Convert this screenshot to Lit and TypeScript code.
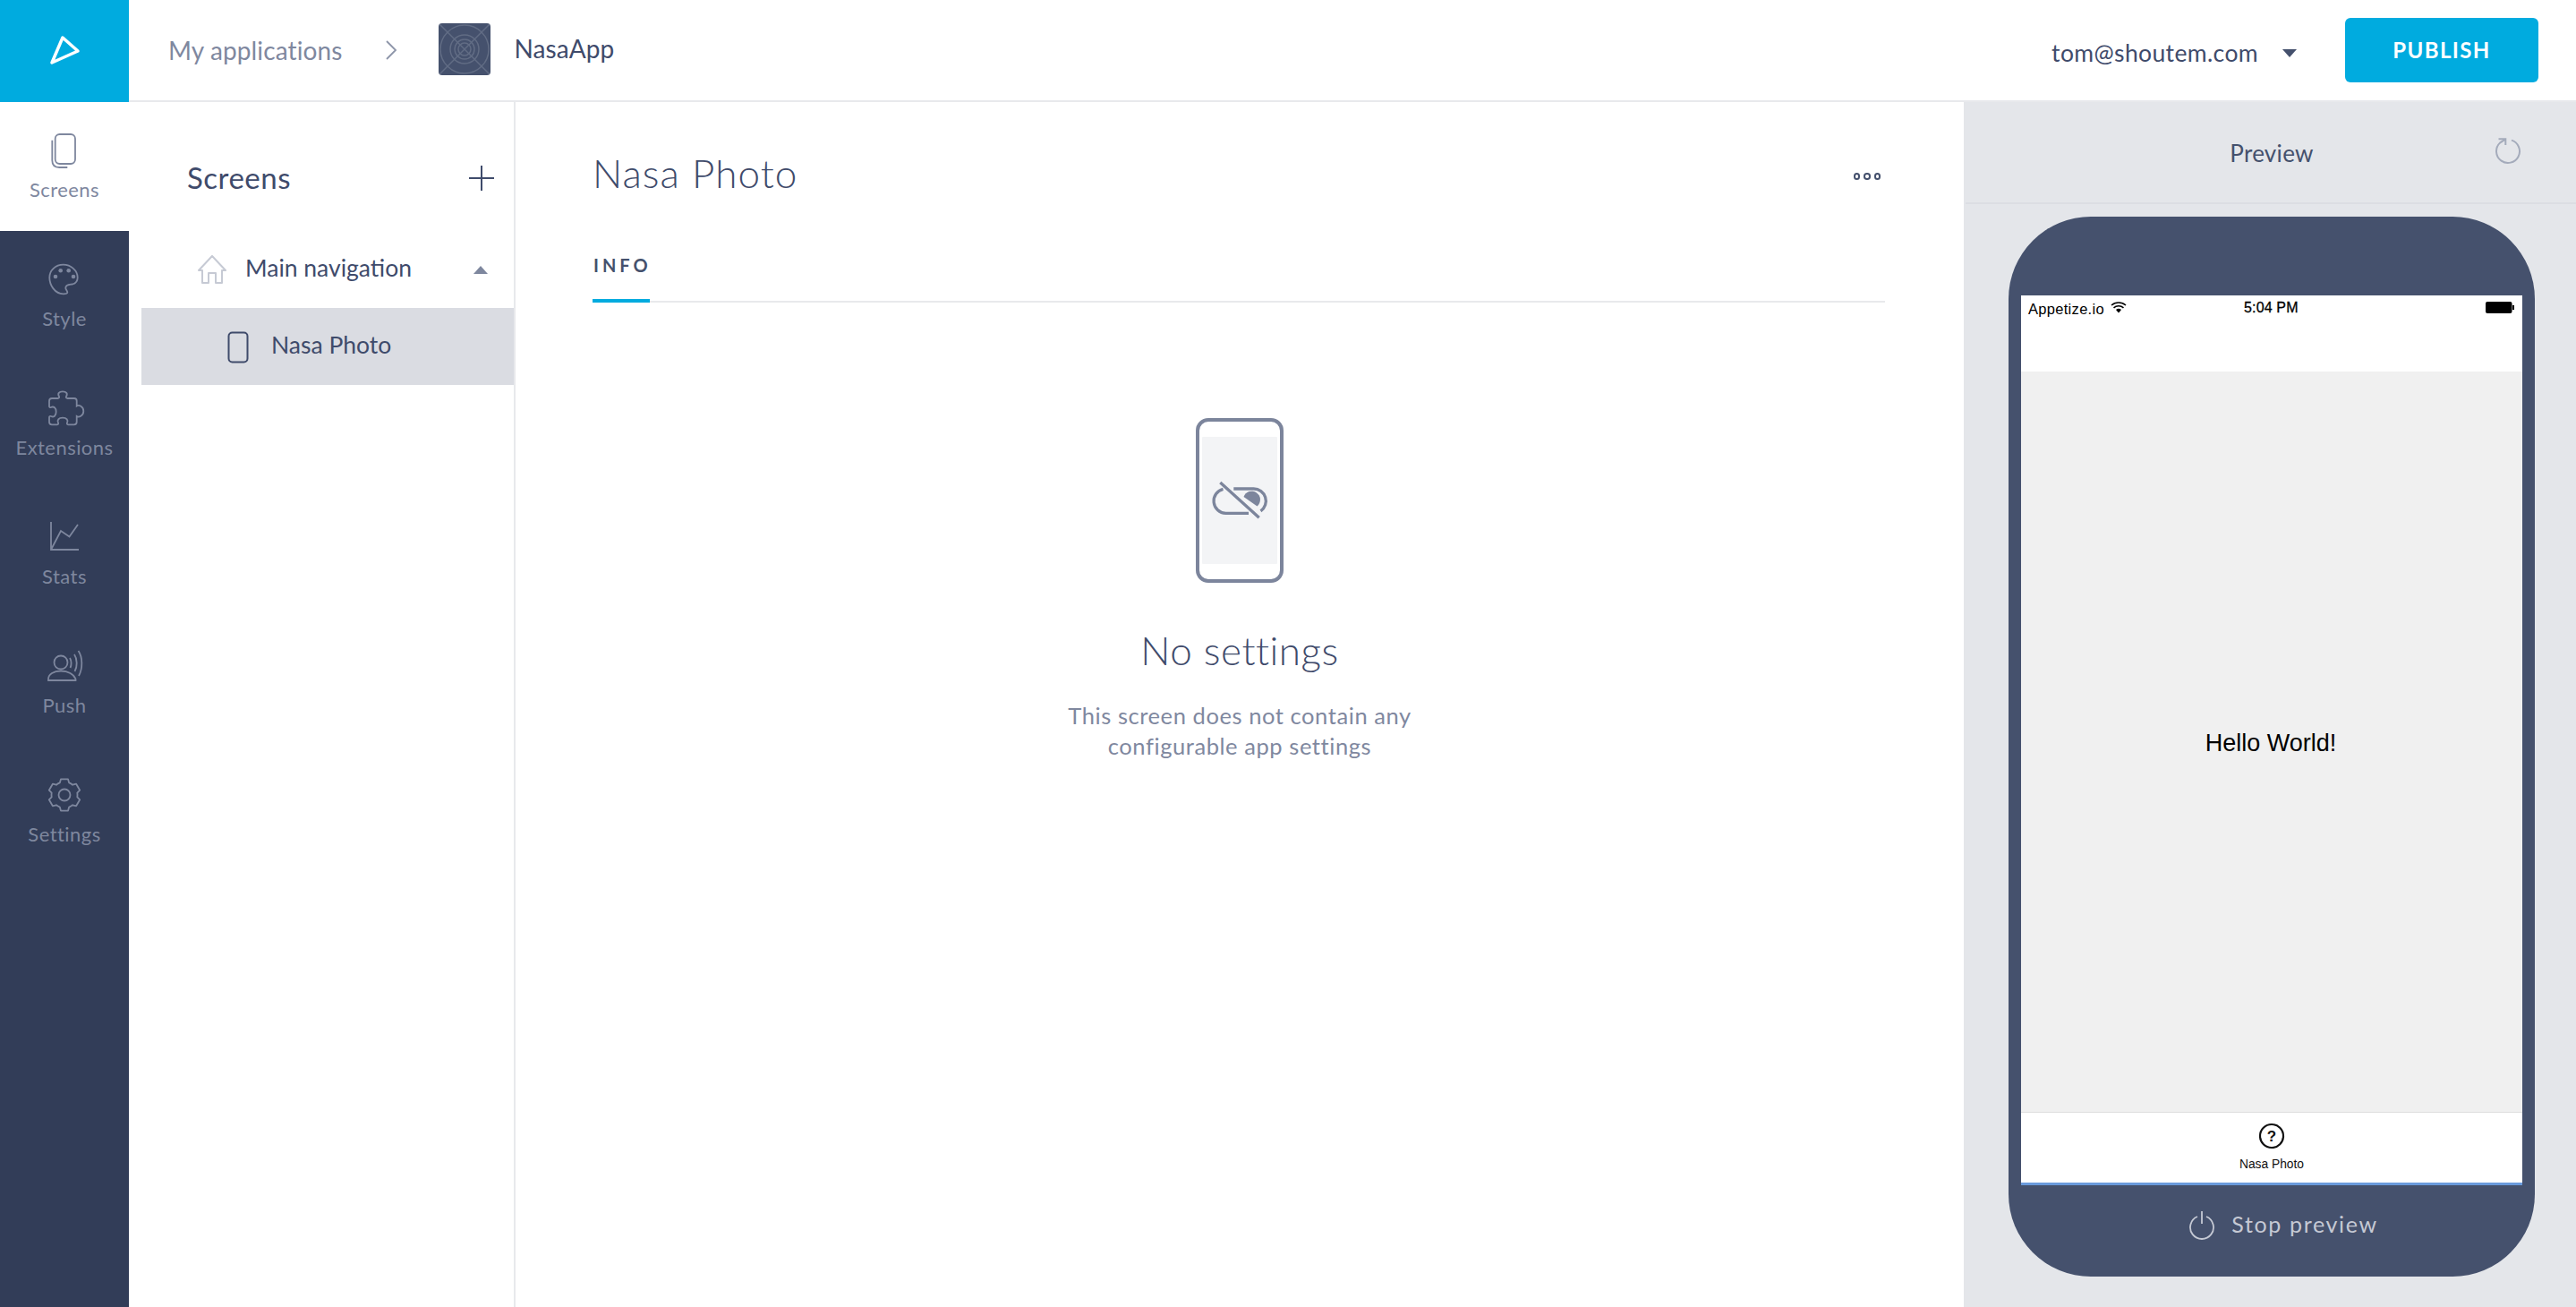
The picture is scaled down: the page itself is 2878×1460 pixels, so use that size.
import { LitElement, html, css, svg } from "lit";
import { customElement } from "lit/decorators.js";

function gearPath(cx: number, cy: number, ro: number, ri: number): string {
  const pt = (r: number, deg: number) => {
    const t = (deg * Math.PI) / 180;
    return `${(cx + r * Math.cos(t)).toFixed(2)} ${(cy - r * Math.sin(t)).toFixed(2)}`;
  };
  let d = "";
  for (let k = 0; k < 6; k++) {
    const a = 90 - 60 * k;
    d += `${k === 0 ? "M" : `A${ri} ${ri} 0 0 1 `}${pt(ri, a + 21)}L${pt(ro, a + 13)}L${pt(ro, a - 13)}L${pt(ri, a - 21)}`;
  }
  const first = pt(ri, 90 + 21);
  return `${d}A${ri} ${ri} 0 0 1 ${first}Z`;
}

const navIcons: Record<string, any> = {
  Screens: svg`<rect x="11.700" y="4" width="22.300" height="33" rx="5"/><path d="M8.300 10.700V33c0 5 3 8 8 8h9"/>`,
  Style: svg`<path d="M20.700 5.700C29 5.700 36.700 12 36.700 20C36.700 24 35 26.500 31 27.500C28.500 28 23.300 27.500 23.300 31.700C23.300 33.500 25.300 34.500 25.300 36.500C25.300 37.800 23 38.300 20.700 38.300C11 38.300 5.300 28 5.300 20C5.300 12 12 5.700 20.700 5.700Z"/><g class="fill"><circle cx="12" cy="19" r="2.300"/><circle cx="17.700" cy="12.300" r="2.300"/><circle cx="26.700" cy="12.300" r="2.300"/><circle cx="32" cy="19" r="2.300"/></g>`,
  Extensions: svg`<path d="M8 11H14.500c1.500 0 2-1 1.500-2c-2-3.500 0-5.700 4-5.700s6 2.200 4 5.700c-.5 1 0 2 1.500 2H33c1.700 0 2.700 1 2.700 2.700V19.500C38 18 43.300 20 43.300 25.300C43.300 30.600 38 32.600 35.700 31V37.300c0 2-1 3-3 3H26c-1 0-1.500-1-1-2c1.500-3-.5-5.600-5-5.600s-6.500 2.600-5 5.600c.5 1 0 2-1 2H8c-2 0-3-1-3-3V32c0-1 1-1.500 2-1c3 1.500 5.700-.5 5.700-5s-2.700-6.500-5.700-5c-1 .5-2 0-2-1V14c0-2 1-3 3-3z"/>`,
  Stats: svg`<path d="M7 5v31h31M7 36l11-21 9.500 6.500L37 8"/>`,
  Push: svg`<circle cx="18" cy="18" r="7.500"/><path d="M4 38v-1.500C4 31 10 27.500 18 27.500S32.500 31 34.500 36.500V38z"/><path d="M28 13c2 3 2 8 .5 11M33 9c3.500 5 3.500 14 .5 19M37.500 5c5 7 5 20 .5 28"/>`,
  Settings: svg`<circle cx="22" cy="22" r="6.500"/><path d="${gearPath(22, 22, 18, 14.5)}" stroke-linejoin="round"/>`,
};

const NAV = ["Screens", "Style", "Extensions", "Stats", "Push", "Settings"];

@customElement("app-root")
export class AppRoot extends LitElement {
  static styles = css`
    :host { display: block; height: 1460px; font-family: "Lato", "Noto Sans", sans-serif; color: #3f4b6b; background: #fff; overflow: hidden; }
    * { box-sizing: border-box; }
    .header { display: flex; align-items: center; height: 114px; background: #fff; border-bottom: 2px solid #e8e9ec; }
    .logo { width: 144px; height: 114px; margin-bottom: -2px; background: #00abdf; display: flex; align-items: center; justify-content: center; flex: none; }
    .crumb { margin-left: 44px; font-size: 28px; color: #7f889f; letter-spacing: 0.12px; }
    .chev { margin-left: 46px; width: 16px; height: 24px; }
    .app-ic { margin-left: 45px; width: 58px; height: 58px; border-radius: 4px; background: #45516d; margin-bottom: 2px; display: block; }
    .app-name { margin-left: 27px; font-size: 28px; color: #3f4b6b; margin-bottom: 4px; letter-spacing: 0.1px; }
    .spacer { flex: 1; }
    .email { font-size: 26.500px; color: #3f4b6b; letter-spacing: 0.38px; margin-top: 6px; }
    .tri-down { margin-left: 27px; margin-top: 6px; width: 0; height: 0; border-left: 8px solid transparent; border-right: 8px solid transparent; border-top: 9px solid #45516d; }
    .publish { margin-left: 54px; margin-right: 42px; width: 216px; height: 72px; padding-bottom: 2px; border-radius: 6px; background: #00abdf; color: #fff; font: 700 24px "Lato", sans-serif; letter-spacing: 1.4px; display: flex; align-items: center; justify-content: center; }

    .body { display: flex; height: 1346px; }
    .sidebar { width: 144px; flex: none; background: #323d58; display: flex; flex-direction: column; }
    .nav { height: 144px; display: flex; flex-direction: column; align-items: center; padding-top: 32px; color: #7e879e; font-size: 22px; letter-spacing: 0.45px; }
    .nav.active { background: #fff; color: #7f889f; }
    .nav svg { width: 44px; height: 44px; display: block; fill: none; stroke: #7e879e; stroke-width: 1.800; margin-bottom: 8px; overflow: visible; }
    .nav .fill { fill: #7e879e; stroke: none; }
    .nav span { line-height: 28px; }

    .panel { width: 432px; flex: none; border-right: 2px solid #e8e9ec; padding-left: 14px; }
    .panel-head { display: flex; align-items: center; justify-content: space-between; height: 170px; padding: 0 22px 0 51px; }
    .panel-head h2 { margin: 0 0 3px; font-size: 33px; font-weight: 400; color: #3f4b6b; letter-spacing: 0.5px; }
    .plus { width: 28px; height: 28px; stroke: #3f4b6b; stroke-width: 2; display: block; }
    .tree-main { display: flex; align-items: center; height: 34px; margin-bottom: 26px; padding: 0 28px 0 63px; }
    .home { width: 32px; height: 32px; fill: none; stroke: #c6cad4; stroke-width: 2; flex: none; }
    .tree-main span { margin-left: 21px; font-size: 26.500px; letter-spacing: 0; color: #3f4b6b; flex: 1; margin-bottom: 4px; }
    .tri-up { width: 0; height: 0; border-left: 8.500px solid transparent; border-right: 8.500px solid transparent; border-bottom: 9px solid #7e879e; margin-right: 1px; }
    .tree-item { display: flex; align-items: center; height: 86px; background: #dadce2; padding-left: 96px; }
    .tree-item svg { width: 24px; height: 36px; fill: none; stroke: #3f4b6b; stroke-width: 2; flex: none; margin-top: 2px; }
    .tree-item span { margin-left: 25px; font-size: 26.500px; letter-spacing: 0; color: #3f4b6b; margin-bottom: 4px; }

    .main { flex: 1; min-width: 0; padding: 0 88px 0 86px; display: flex; flex-direction: column; }
    .title-row { display: flex; justify-content: space-between; align-items: center; height: 96px; margin-top: 32px; }
    .title-row h1 { margin: 0 0 2px; font-size: 44px; font-weight: 300; color: #3f4b6b; letter-spacing: 1.05px; }
    .dots { display: flex; gap: 4px; margin-right: 5px; margin-top: 6px; }
    .dots i { width: 7.500px; height: 7.500px; border: 2px solid #45516d; border-radius: 50%; display: block; }
    .tabs { border-bottom: 2px solid #e8e9ec; height: 96px; display: flex; align-items: flex-end; }
    .tab { width: 64px; height: 54px; border-bottom: 4px solid #00abdf; margin-bottom: -2px; font-size: 20px; font-weight: 700; letter-spacing: 4px; color: #45516d; padding-left: 1px; white-space: nowrap; line-height: 24px; }
    .empty { display: flex; flex-direction: column; align-items: center; margin-top: 129px; padding-left: 2px; }
    .illus { width: 98px; height: 184px; display: block; }
    .empty h3 { margin: 47px 0 0; font-size: 44px; font-weight: 300; letter-spacing: 0.5px; color: #3f4b6b; line-height: 56px; }
    .empty p { margin: 29px 0 0; font-size: 25.500px; line-height: 33.500px; color: #7f889f; text-align: center; letter-spacing: 0.57px; }

    .preview { width: 684px; flex: none; background: #e4e6ea; display: flex; flex-direction: column; align-items: stretch; }
    .preview-head { height: 114px; margin-left: 2px; border-bottom: 2px solid #dcdee3; display: flex; align-items: center; justify-content: center; position: relative; font-size: 26px; color: #45516d; letter-spacing: 0.3px; padding-left: 2px; }
    .preview-head span { margin-top: 2px; }
    .refresh { position: absolute; left: 592px; top: 40px; width: 30px; height: 30px; fill: none; stroke: #a4abbb; stroke-width: 2; overflow: visible; }
    .phone { margin: 14px 46px 0 50px; height: 1184px; background: #45516d; border-radius: 92px; padding: 88px 14px 0; display: flex; flex-direction: column; }
    .screen { height: 994px; background: #fff; display: flex; flex-direction: column; font-family: "Liberation Sans", Arial, sans-serif; color: #000; }
    .status { height: 85px; display: flex; align-items: flex-start; padding: 6px 9px 0 8px; position: relative; font-size: 16.500px; line-height: 18px; letter-spacing: 0.3px; }
    .wifi { width: 18px; height: 14px; margin-left: 7px; }
    .time { position: absolute; left: 249px; top: 5px; font-size: 16px; letter-spacing: 0.15px; -webkit-text-stroke: 0.3px #000; }
    .batt { margin-left: auto; margin-top: 1px; width: 32px; height: 13px; display: block; }
    .content { flex: 1; background: #f0f0f0; border-bottom: 1px solid #dedede; display: flex; align-items: center; justify-content: center; font-size: 27px; padding: 3px 2px 0 0; }
    .tabbar { height: 81px; background: #fff; border-bottom: 3px solid #6a9bdc; display: flex; flex-direction: column; align-items: center; padding-top: 11px; }
    .tabbar svg { width: 30px; height: 30px; display: block; }
    .tabbar span { font-size: 13.800px; margin-top: 9px; line-height: 16px; color: #111; }
    .stop { flex: 1; display: flex; align-items: center; justify-content: center; color: #c5c9d4; font-size: 25px; letter-spacing: 1.65px; padding-left: 26px; margin-top: -16px; }
    .stop svg { width: 30px; height: 34px; fill: none; stroke: #c5c9d4; stroke-width: 1.800; margin-right: 18px; margin-top: 4px; }
  `;

  render() {
    return html`
      <div class="header">
        <div class="logo">
          <svg width="36" height="36" viewBox="0 0 36 36" fill="none" stroke="#fff" stroke-width="3.500" stroke-linejoin="round"><path d="M16 3 L33 18 L4 31 Z"/></svg>
        </div>
        <span class="crumb">My applications</span>
        <svg class="chev" viewBox="0 0 16 24" fill="none" stroke="#8d95a9" stroke-width="1.800"><path d="M3 2l10 10L3 22"/></svg>
        <svg class="app-ic" viewBox="0 0 58 58" fill="none" stroke="#616c84" stroke-width="1.500">
          <circle cx="29" cy="29" r="27"/><circle cx="29" cy="29" r="16"/><circle cx="29" cy="29" r="11"/><circle cx="29" cy="29" r="7"/><path d="M0 0l58 58M58 0L0 58"/>
        </svg>
        <span class="app-name">NasaApp</span>
        <span class="spacer"></span>
        <span class="email">tom@shoutem.com</span>
        <span class="tri-down"></span>
        <div class="publish">PUBLISH</div>
      </div>
      <div class="body">
        <div class="sidebar">
          ${NAV.map((n, i) => html`<div class="nav ${i === 0 ? "active" : ""}"><svg viewBox="0 0 44 44">${navIcons[n]}</svg><span>${n}</span></div>`)}
        </div>
        <div class="panel">
          <div class="panel-head">
            <h2>Screens</h2>
            <svg class="plus" viewBox="0 0 28 28"><path d="M14 0v28M0 14h28"/></svg>
          </div>
          <div class="tree-main">
            <svg class="home" viewBox="0 0 32 32"><path d="M1 17L16 1l15 16h-4v14H20V20h-8v11H5V17z" stroke-linejoin="round"/></svg>
            <span>Main navigation</span>
            <i class="tri-up"></i>
          </div>
          <div class="tree-item">
            <svg viewBox="0 0 24 36"><rect x="1.500" y="1.500" width="21" height="33" rx="4"/></svg>
            <span>Nasa Photo</span>
          </div>
        </div>
        <div class="main">
          <div class="title-row">
            <h1>Nasa Photo</h1>
            <div class="dots"><i></i><i></i><i></i></div>
          </div>
          <div class="tabs"><div class="tab">INFO</div></div>
          <div class="empty">
            <svg class="illus" viewBox="0 0 98 184">
              <rect x="7" y="21" width="84" height="142" rx="1" fill="#f3f4f6"/>
              <rect x="2" y="2" width="94" height="180" rx="12" fill="none" stroke="#7c859c" stroke-width="4"/>
              <g fill="none" stroke="#7c859c" stroke-width="3.300">
                <path d="M30.500 79.300A13.700 13.700 0 0 0 33.400 106.300H59"/>
                <path d="M42.300 79H64.600A13.700 13.700 0 0 1 72.500 103.900"/>
                <path d="M27.300 72L70.700 111.300"/>
              </g>
              <path d="M53.500 88A9.500 9.500 0 1 1 68.500 98.500Z" fill="#7c859c"/>
            </svg>
            <h3>No settings</h3>
            <p>This screen does not contain any<br />configurable app settings</p>
          </div>
        </div>
        <div class="preview">
          <div class="preview-head">
            <span>Preview</span>
            <svg class="refresh" viewBox="0 0 30 30"><path d="M18 2.600A13 13 0 1 1 5 5.600L11.300 1.300M3.500 1.300H11.300V8"/></svg>
          </div>
          <div class="phone">
            <div class="screen">
              <div class="status">
                <span>Appetize.io</span>
                <svg class="wifi" viewBox="0 0 18 14"><path d="M9 13.500L6 10a4.500 4.500 0 0 1 6 0z"/><path d="M1 5a12 12 0 0 1 16 0M3.500 7.800a8.500 8.500 0 0 1 11 0" fill="none" stroke="#000" stroke-width="1.600"/></svg>
                <span class="time">5:04 PM</span>
                <svg class="batt" viewBox="0 0 32 13"><rect x="0" y="0" width="29.500" height="13" rx="2"/><rect x="30" y="4" width="2" height="5"/></svg>
              </div>
              <div class="content">Hello World!</div>
              <div class="tabbar">
                <svg viewBox="0 0 30 30"><circle cx="15" cy="15" r="13" fill="none" stroke="#111" stroke-width="2.200"/><text x="15" y="21" text-anchor="middle" font-family="Liberation Sans" font-weight="700" font-size="17" fill="#111">?</text></svg>
                <span>Nasa Photo</span>
              </div>
            </div>
            <div class="stop">
              <svg viewBox="0 0 30 34"><path d="M10 7a13 13 0 1 0 10 0M15 1v14"/></svg>
              Stop preview
            </div>
          </div>
        </div>
      </div>
    `;
  }
}
